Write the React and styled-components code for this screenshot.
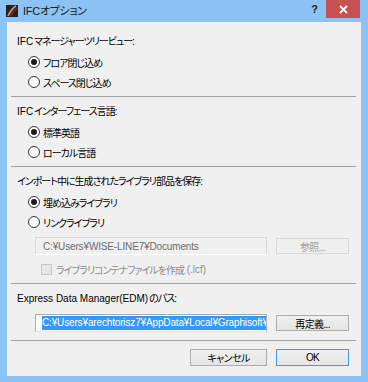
import React from 'react'
import { styled, createGlobalStyle } from 'styled-components'

const GlobalStyle = createGlobalStyle`
  html, body {
    margin: 0;
    padding: 0;
    background: #8ac3f4;
  }
  body {
    font-family: 'Liberation Sans', 'Noto Sans CJK JP', sans-serif;
    font-size: 10px;
    color: #000;
  }
`

const App = () => {
  return (
    <StWindow>
      <GlobalStyle />
      <StTitleBar>
        <StTitleIcon viewBox='0 0 12 12'>
          <rect width='12' height='12' fill='#2b1d1a' />
          <path d='M2 11 C4 7 6 3 10 1' stroke='#c9a08e' strokeWidth='1.6' fill='none' />
          <path d='M5 11 C6 8 8 5 11 3' stroke='#8a2a20' strokeWidth='1.2' fill='none' />
        </StTitleIcon>
        <StTitleText>IFCオプション</StTitleText>
        <StHelp>?</StHelp>
        <StClose>
          <svg width='9' height='9' viewBox='0 0 9 9'>
            <path d='M1 1 L8 8 M8 1 L1 8' stroke='#fff' strokeWidth='1.8' />
          </svg>
        </StClose>
      </StTitleBar>

      <StClient>
        <StSection>
          <StLabel>
            <StLatin>IFC</StLatin>マネージャーツリービュー:
          </StLabel>
          <StOption>
            <StRadio $checked />
            フロア閉じ込め
          </StOption>
          <StOption>
            <StRadio />
            スペース閉じ込め
          </StOption>
        </StSection>
        <StSeparator />

        <StSection>
          <StLabel>
            <StLatin>IFC</StLatin>インターフェース言語:
          </StLabel>
          <StOption>
            <StRadio $checked />
            標準英語
          </StOption>
          <StOption>
            <StRadio />
            ローカル言語
          </StOption>
        </StSection>
        <StSeparator />

        <StSection>
          <StLabel>インポート中に生成されたライブラリ部品を保存:</StLabel>
          <StOption>
            <StRadio $checked />
            埋め込みライブラリ
          </StOption>
          <StOption>
            <StRadio />
            リンクライブラリ
          </StOption>
          <StFieldRow>
            <StPathField $disabled>C:¥Users¥WISE-LINE7¥Documents</StPathField>
            <StButton $disabled>参照...</StButton>
          </StFieldRow>
          <StCheckRow>
            <StCheckBox />
            ライブラリコンテナファイルを作成<StLatin>&nbsp;(.lcf)</StLatin>
          </StCheckRow>
        </StSection>
        <StSeparator />

        <StSection>
          <StLabel>
            <StLatin>Express Data Manager(EDM)</StLatin>のパス:
          </StLabel>
          <StFieldRow>
            <StPathField>
              <StSelected>C:¥Users¥arechtorisz7¥AppData¥Local¥Graphisoft¥</StSelected>
            </StPathField>
            <StButton>再定義...</StButton>
          </StFieldRow>
        </StSection>
        <StSeparator $gap={8} />

        <StFooter>
          <StButton>キャンセル</StButton>
          <StButton $default>OK</StButton>
        </StFooter>
      </StClient>
    </StWindow>
  )
}

export default App

const StWindow = styled.div`
  width: 368px;
  height: 382px;
  box-sizing: border-box;
  background: #8ac3f4;
  display: flex;
  flex-direction: column;
  padding: 0 7px 6px 7px;
`

const StTitleBar = styled.div`
  height: 22px;
  display: flex;
  align-items: flex-start;
  margin: 0 -7px 0 -3px;
`

const StTitleIcon = styled.svg`
  width: 12px;
  height: 12px;
  margin: 5px 0 0 2px;
  flex-shrink: 0;
`

const StTitleText = styled.div`
  font-family: 'Liberation Sans', 'Noto Sans CJK JP', sans-serif;
  font-size: 11px;
  font-feature-settings: 'palt';
  letter-spacing: -0.3px;
  line-height: 22px;
  margin-left: 5px;
  color: #1a1a1a;
  flex: 1;
`

const StHelp = styled.div`
  font-family: 'Liberation Sans', sans-serif;
  font-weight: bold;
  font-size: 11px;
  line-height: 18px;
  color: #222;
  margin-right: 8px;
`

const StClose = styled.div`
  width: 34px;
  height: 18px;
  margin-right: 8px;
  background: #c75050;
  display: flex;
  align-items: center;
  justify-content: center;
`

const StClient = styled.div`
  flex: 1;
  background: #f0f0f0;
  display: flex;
  flex-direction: column;
  padding: 10px 5px 0 4px;
`

const StSection = styled.div`
  display: flex;
  flex-direction: column;
`

const StLabel = styled.div`
  height: 20px;
  line-height: 20px;
  padding-left: 6px;
  font-feature-settings: 'palt';
  letter-spacing: -1px;
  white-space: nowrap;
`

const StLatin = styled.span`
  letter-spacing: 0;
  margin-right: 1px;
`

const StOption = styled.div`
  height: 20px;
  display: flex;
  align-items: center;
  padding-left: 17px;
  font-feature-settings: 'palt';
  letter-spacing: -1px;
  white-space: nowrap;
`

const StRadio = styled.span`
  width: 12px;
  height: 12px;
  box-sizing: border-box;
  border-radius: 50%;
  border: 1px solid #333;
  background: #fff;
  margin-right: 3px;
  display: flex;
  align-items: center;
  justify-content: center;
  &::after {
    content: '';
    width: 6px;
    height: 6px;
    border-radius: 50%;
    background: ${(p) => (p.$checked ? '#1a1a1a' : 'transparent')};
  }
`

const StFieldRow = styled.div`
  display: flex;
  align-items: center;
  gap: 9px;
  padding: 0 7px 0 24px;
  margin-top: 5px;
`

const StPathField = styled.div`
  width: 233px;
  height: 18px;
  box-sizing: border-box;
  border: 1px solid ${(p) => (p.$disabled ? '#d9d9d9' : '#abadb3')};
  border-bottom-color: ${(p) => (p.$disabled ? '#fff' : '#e3e9ef')};
  background: ${(p) => (p.$disabled ? '#f0f0f0' : '#fff')};
  color: ${(p) => (p.$disabled ? '#6d6d6d' : '#000')};
  display: flex;
  align-items: center;
  padding-left: ${(p) => (p.$disabled ? '7px' : '6px')};
  letter-spacing: -0.15px;
  white-space: nowrap;
  overflow: hidden;
`

const StSelected = styled.span`
  background: #3399ff;
  color: #fff;
  line-height: 14px;
  padding-right: 1px;
`

const StButton = styled.div`
  width: 73px;
  height: 16px;
  box-sizing: border-box;
  display: flex;
  align-items: center;
  justify-content: center;
  font-feature-settings: 'palt';
  letter-spacing: -0.6px;
  border: 1px solid ${(p) => (p.$disabled ? '#d9d9d9' : p.$default ? '#3c9ae8' : '#acacac')};
  background: ${(p) =>
    p.$disabled ? '#efefef' : 'linear-gradient(#f0f0f0, #e5e5e5)'};
  color: ${(p) => (p.$disabled ? '#a0a0a0' : '#000')};
`

const StCheckRow = styled.div`
  height: 20px;
  display: flex;
  align-items: center;
  padding-left: 30px;
  margin-top: 4px;
  color: #8d8d8d;
  font-feature-settings: 'palt';
  letter-spacing: -1px;
  white-space: nowrap;
`

const StCheckBox = styled.span`
  width: 11px;
  height: 11px;
  box-sizing: border-box;
  border: 1px solid #c5c5c5;
  background: #e6e6e6;
  margin-right: 4px;
`

const StSeparator = styled.div`
  height: 1px;
  background: #a0a0a0;
  margin: ${(p) => p.$gap ?? 4}px 0 5px 0;
`

const StFooter = styled.div`
  display: flex;
  justify-content: flex-end;
  gap: 9px;
  padding-right: 7px;
  margin-top: 3px;
  & > div {
    height: 17px;
  }
  & > div:first-child {
    width: 77px;
  }
`
